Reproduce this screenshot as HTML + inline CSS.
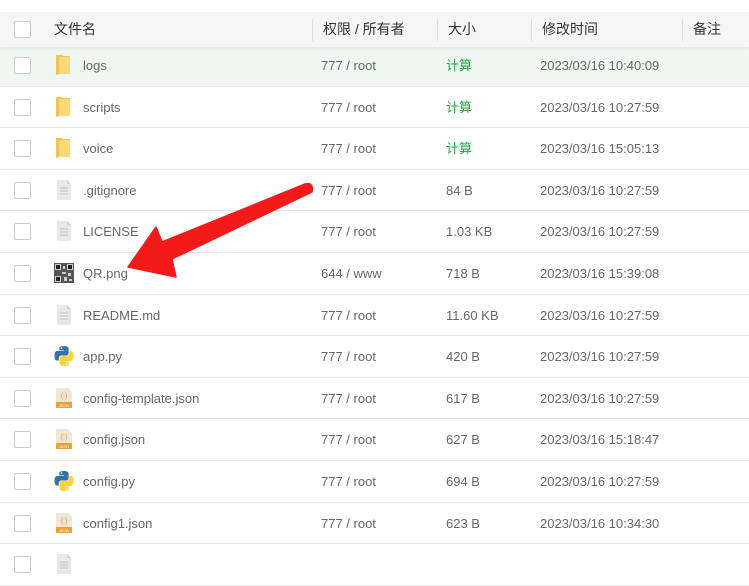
<!DOCTYPE html>
<html><head><meta charset="utf-8"><style>
*{margin:0;padding:0;box-sizing:border-box}
body{width:749px;height:559px;overflow:hidden;background:#fff;font-family:"Liberation Sans","Noto Sans CJK SC",sans-serif;position:relative}
.hdr{position:absolute;left:0;top:12px;width:749px;height:35px;background:#f5f5f5;box-shadow:0 2px 3px rgba(0,0,0,.06);z-index:2}
.hdr span{position:absolute;top:0;line-height:35px;font-size:14px;color:#333}
.hdr i{position:absolute;top:7px;width:1px;height:22px;background:#ddd}
.row{position:absolute;left:0;width:749px;height:41.6px;border-bottom:1px solid #e6e6e6}
.row span{position:absolute;top:0;line-height:41px;font-size:13px;color:#666;white-space:nowrap}
.cb{position:absolute;left:14px;width:17px;height:17px;border:1px solid #ccc;border-radius:2px;background:#fff}
.ic{position:absolute;left:53px;top:9px;width:22px;height:22px}
.g{color:#20a53a!important}
</style></head><body>
<div class="hdr">
<div class="cb" style="top:9px"></div>
<span style="left:54px">文件名</span>
<i style="left:312px"></i><span style="left:323px">权限 / 所有者</span>
<i style="left:437px"></i><span style="left:448px">大小</span>
<i style="left:531px"></i><span style="left:542px">修改时间</span>
<i style="left:682px"></i><span style="left:693px">备注</span>
</div>

<svg width="0" height="0" style="position:absolute"><defs>
<symbol id="fold" viewBox="0 0 22 22"><path d="M3 1h6l1 1h7v18H6l-3 1z" fill="#f6c24f"/><path d="M6 3h11v17H6z" fill="#fbd97a"/></symbol>
<symbol id="doc" viewBox="0 0 22 22"><path d="M4 1h10l4 4v16H4z" fill="#e8e8e8"/><path d="M14 1v4h4z" fill="#d0d0d0"/><path d="M7 9h8M7 12h8M7 15h8" stroke="#c6c6c6" stroke-width="1"/></symbol>
<symbol id="json" viewBox="0 0 22 22"><path d="M3 1h12l4 4v16H3z" fill="#efe6d6"/><rect x="3" y="15" width="16" height="6" fill="#f0a030"/><text x="11" y="11" font-size="7" fill="#e0a040" text-anchor="middle" font-family="Liberation Sans">{:}</text><text x="11" y="20" font-size="4" fill="#fff" text-anchor="middle" font-family="Liberation Sans">JSON</text></symbol>
<symbol id="py" viewBox="0 0 22 22"><path d="M10.8 1C6 1 6.3 3 6.3 3v2.2h4.6v.7H4.5S1.5 5.6 1.5 10.7s2.7 4.8 2.7 4.8h1.6v-2.3s-.1-2.7 2.7-2.7h4.5s2.6 0 2.6-2.5V3.8S16 1 10.8 1z" fill="#3672a4"/><path d="M11.2 21c4.8 0 4.5-2 4.5-2v-2.2h-4.6v-.7h6.4s3-.3 3-5.4-2.7-4.8-2.7-4.8h-1.6v2.3s.1 2.7-2.7 2.7H9s-2.6 0-2.6 2.5v4.2S6 21 11.2 21z" fill="#fdd23a"/><circle cx="8.5" cy="3" r=".8" fill="#fff"/><circle cx="13.5" cy="19" r=".8" fill="#fff"/></symbol>
</defs></svg>

<div class="row" style="top:45px;background:#eef7f2"><div class="cb" style="top:12px"></div><svg class="ic"><use href="#fold"/></svg><span style="left:83px">logs</span><span style="left:321px">777 / root</span><span class="g" style="left:446px">计算</span><span style="left:540px">2023/03/16 10:40:09</span></div>
<div class="row" style="top:86.6px"><div class="cb" style="top:12px"></div><svg class="ic"><use href="#fold"/></svg><span style="left:83px">scripts</span><span style="left:321px">777 / root</span><span class="g" style="left:446px">计算</span><span style="left:540px">2023/03/16 10:27:59</span></div>
<div class="row" style="top:128.2px"><div class="cb" style="top:12px"></div><svg class="ic"><use href="#fold"/></svg><span style="left:83px">voice</span><span style="left:321px">777 / root</span><span class="g" style="left:446px">计算</span><span style="left:540px">2023/03/16 15:05:13</span></div>
<div class="row" style="top:169.8px"><div class="cb" style="top:12px"></div><svg class="ic"><use href="#doc"/></svg><span style="left:83px">.gitignore</span><span style="left:321px">777 / root</span><span style="left:446px">84 B</span><span style="left:540px">2023/03/16 10:27:59</span></div>
<div class="row" style="top:211.4px"><div class="cb" style="top:12px"></div><svg class="ic"><use href="#doc"/></svg><span style="left:83px">LICENSE</span><span style="left:321px">777 / root</span><span style="left:446px">1.03 KB</span><span style="left:540px">2023/03/16 10:27:59</span></div>
<div class="row" style="top:253px"><div class="cb" style="top:12px"></div><svg class="ic" viewBox="0 0 22 22"><rect x="1" y="1" width="20" height="20" fill="#555"/><path d="M2 2h6v6H2zM14 2h6v6h-6zM2 14h6v6H2zM10 4h2v3h-2zM9 10h4v2H9zM15 11h3v3h-3zM11 15h3v4h-3zM16 17h3v2h-3z" fill="#ccc"/><path d="M3 3h4v4H3zM15 3h4v4h-4zM3 15h4v4H3z" fill="#222"/></svg><span style="left:83px">QR.png</span><span style="left:321px">644 / www</span><span style="left:446px">718 B</span><span style="left:540px">2023/03/16 15:39:08</span></div>
<div class="row" style="top:294.6px"><div class="cb" style="top:12px"></div><svg class="ic"><use href="#doc"/></svg><span style="left:83px">README.md</span><span style="left:321px">777 / root</span><span style="left:446px">11.60 KB</span><span style="left:540px">2023/03/16 10:27:59</span></div>
<div class="row" style="top:336.2px"><div class="cb" style="top:12px"></div><svg class="ic"><use href="#py"/></svg><span style="left:83px">app.py</span><span style="left:321px">777 / root</span><span style="left:446px">420 B</span><span style="left:540px">2023/03/16 10:27:59</span></div>
<div class="row" style="top:377.8px"><div class="cb" style="top:12px"></div><svg class="ic"><use href="#json"/></svg><span style="left:83px">config-template.json</span><span style="left:321px">777 / root</span><span style="left:446px">617 B</span><span style="left:540px">2023/03/16 10:27:59</span></div>
<div class="row" style="top:419.4px"><div class="cb" style="top:12px"></div><svg class="ic"><use href="#json"/></svg><span style="left:83px">config.json</span><span style="left:321px">777 / root</span><span style="left:446px">627 B</span><span style="left:540px">2023/03/16 15:18:47</span></div>
<div class="row" style="top:461px"><div class="cb" style="top:12px"></div><svg class="ic"><use href="#py"/></svg><span style="left:83px">config.py</span><span style="left:321px">777 / root</span><span style="left:446px">694 B</span><span style="left:540px">2023/03/16 10:27:59</span></div>
<div class="row" style="top:502.6px"><div class="cb" style="top:12px"></div><svg class="ic"><use href="#json"/></svg><span style="left:83px">config1.json</span><span style="left:321px">777 / root</span><span style="left:446px">623 B</span><span style="left:540px">2023/03/16 10:34:30</span></div>
<div class="row" style="top:544.2px"><div class="cb" style="top:12px"></div><svg class="ic"><use href="#doc"/></svg></div>

<svg style="position:absolute;left:0;top:0;z-index:3" width="749" height="559"><path d="M128 267 L156 227 L162 242 L305 184 Q314 182 312 192 L172 259 L176 277 Z" fill="#f41a1a" stroke="#f41a1a" stroke-width="1.5" stroke-linejoin="round"/></svg>
</body></html>
